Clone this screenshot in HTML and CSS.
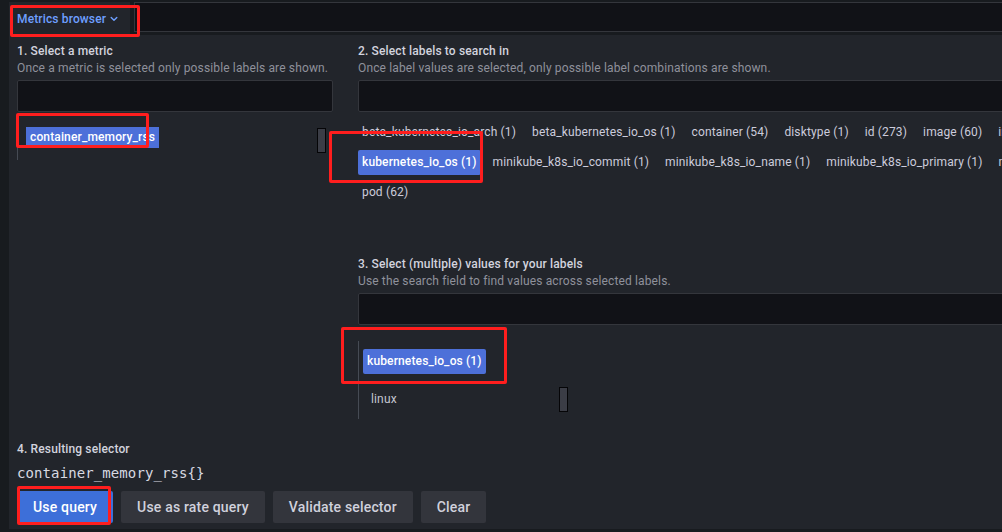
FILE: index.html
```html
<!DOCTYPE html>
<html lang="en">
<head>
<meta charset="utf-8">
<title>Metrics browser</title>
<link rel="stylesheet" href="styles.css">
</head>
<body>
<div class="app">
  <div class="toolbar">
    <button class="mb-btn">Metrics browser
      <svg class="chev" width="8" height="6" viewBox="0 0 8 6"><path d="M1.2 1.5 L4 4.3 L6.8 1.5" fill="none" stroke="#6e9fff" stroke-width="1.4" stroke-linecap="round" stroke-linejoin="round"/></svg>
    </button>
    <div class="query-input"></div>
  </div>

  <div class="browser">
    <div class="columns">
      <section class="col-metric">
        <div class="sec-title">1. Select a metric</div>
        <div class="sec-desc">Once a metric is selected only possible labels are shown.</div>
        <div class="input"></div>
        <div class="metric-list">
          <span class="chip chip-metric">container_memory_rss</span>
          <span class="thumb thumb-metric"></span>
        </div>
      </section>

      <section class="col-labels">
        <div class="sec-title">2. Select labels to search in</div>
        <div class="sec-desc">Once label values are selected, only possible label combinations are shown.</div>
        <div class="input"></div>
        <div class="label-list">
          <span class="label">beta_kubernetes_io_arch (1)</span>
          <span class="label">beta_kubernetes_io_os (1)</span>
          <span class="label">container (54)</span>
          <span class="label">disktype (1)</span>
          <span class="label">id (273)</span>
          <span class="label">image (60)</span>
          <span class="label">instance (1)</span>
          <span class="label">job (1)</span>
          <span class="label">kubernetes_io_arch (1)</span>
          <span class="label">kubernetes_io_hostname (1)</span>
          <span class="row-break"></span>
          <span class="label label-on">kubernetes_io_os (1)</span>
          <span class="label">minikube_k8s_io_commit (1)</span>
          <span class="label">minikube_k8s_io_name (1)</span>
          <span class="label">minikube_k8s_io_primary (1)</span>
          <span class="label">minikube_k8s_io_updated_at (1)</span>
          <span class="label">minikube_k8s_io_version (1)</span>
          <span class="label">name (64)</span>
          <span class="row-break"></span>
          <span class="label">pod (62)</span>
        </div>

        <div class="sec-values">
          <div class="sec-title">3. Select (multiple) values for your labels</div>
          <div class="sec-desc">Use the search field to find values across selected labels.</div>
          <div class="input"></div>
          <div class="values">
            <span class="chip chip-value">kubernetes_io_os (1)</span>
            <div class="value-list">
              <span class="value">linux</span>
              <span class="thumb"></span>
            </div>
          </div>
        </div>
      </section>
    </div>

    <section class="result">
      <div class="sec-title">4. Resulting selector</div>
      <div class="selector">container_memory_rss{}</div>
      <div class="actions">
        <button class="btn btn-primary">Use query</button>
        <button class="btn">Use as rate query</button>
        <button class="btn">Validate selector</button>
        <button class="btn">Clear</button>
      </div>
    </section>
  </div>

  <div class="annot annot-1"></div>
  <div class="annot annot-2"></div>
  <div class="annot annot-3"></div>
  <div class="annot annot-4"></div>
  <div class="annot annot-5"></div>
</div>
</body>
</html>
```

FILE: styles.css
```css
* { box-sizing: border-box; }

html, body {
  margin: 0;
  padding: 0;
}

body {
  width: 1002px;
  height: 532px;
  overflow: hidden;
  background: #181b1f;
  font-family: Roboto, "Liberation Sans", sans-serif;
  letter-spacing: 0.14px;
  color: #ccccdc;
  position: relative;
}

.app {
  padding-left: 9px;
  height: 529px;
  display: flex;
  flex-direction: column;
}

/* top toolbar */
.toolbar {
  display: flex;
  height: 35px;
  flex: none;
}

.mb-btn {
  width: 121px;
  margin-top: 2px;
  background: #22252b;
  border: 0;
  color: #6e9fff;
  font: 500 12px Roboto, "Liberation Sans", sans-serif;
  letter-spacing: 0.14px;
  padding: 0 0 0 8px;
  display: flex;
  align-items: center;
  gap: 4px;
}

.chev { margin-top: 1px; }

.query-input {
  flex: 1;
  margin: 2px 0 3px 4px;
  background: #111217;
  border: 1px solid #34363c;
  border-right: 0;
}

/* browser panel */
.browser {
  flex: 1;
  background: #22252b;
  padding: 8px 0 6px 8px;
  display: flex;
  flex-direction: column;
}

.columns {
  display: flex;
  gap: 25px;
}

.col-metric {
  flex: 0 0 316px;
}

.col-labels {
  flex: 0 0 900px;
}

.sec-title {
  font-size: 12px;
  font-weight: 500;
  line-height: 16px;
  color: #d2d3de;
}

.sec-desc {
  margin-top: 1px;
  font-size: 12px;
  line-height: 16px;
  color: #8f919b;
}

.input {
  margin-top: 4px;
  height: 32px;
  background: #111217;
  border: 1px solid #34363c;
  border-radius: 2px;
}

/* metric list */
.metric-list {
  margin-top: 3px;
  height: 45px;
  border-left: 1px solid #464b54;
  padding: 12px 7px 0 8px;
  display: flex;
  justify-content: space-between;
  align-items: flex-start;
}

.chip {
  background: #4d70d9;
  color: #ffffff;
  font-size: 12px;
  font-weight: 500;
  padding: 0 4px;
  border-radius: 2px;
}

.chip-metric {
  height: 21px;
  line-height: 21px;
  border-radius: 0;
}

.thumb {
  width: 9px;
  height: 25px;
  background: #3b3d46;
  border: 1px solid #050507;
}

.thumb-metric { margin-top: 1px; }

/* labels */
.label-list {
  margin-top: 8px;
  width: 1500px;
  display: flex;
  flex-wrap: wrap;
}

.label {
  height: 25px;
  line-height: 25px;
  padding: 0 4px;
  margin: 0 8px 5px 0;
  font-size: 12px;
  color: #ccccdc;
  border-radius: 2px;
}

.label-on {
  background: #4d70d9;
  color: #ffffff;
  font-weight: 500;
}

.row-break {
  flex-basis: 100%;
  height: 0;
}

/* values */
.sec-values {
  margin-top: 46px;
}

.values {
  margin-top: 16px;
  height: 78px;
  border-left: 1px solid #464b54;
  padding: 8px 0 0 4px;
  display: flex;
  flex-direction: column;
  align-items: flex-start;
}

.chip-value {
  height: 25px;
  line-height: 25px;
}

.value-list {
  margin-top: 13px;
  width: 205px;
  display: flex;
  justify-content: space-between;
  align-items: flex-start;
}

.value {
  padding-left: 8px;
  line-height: 24px;
  font-size: 12px;
  color: #c4c5d0;
}

/* result */
.result {
  margin-top: 22px;
}

.selector {
  margin-top: 6px;
  font-family: "DejaVu Sans Mono", "Liberation Mono", monospace;
  font-size: 14px;
  letter-spacing: 0.1px;
  line-height: 20px;
  color: #d8d9e2;
}

.actions {
  margin-top: 8px;
  display: flex;
  gap: 8px;
}

.btn {
  height: 32px;
  padding: 0 16px;
  border: 0;
  border-radius: 2px;
  background: #33353c;
  color: #d0d1dc;
  font: 500 14px Roboto, "Liberation Sans", sans-serif;
  letter-spacing: 0.18px;
}

.btn-primary {
  background: #3d6fd9;
  color: #ffffff;
}

/* red annotation boxes drawn over the screenshot */
.annot {
  position: absolute;
  border: 3px solid #ff1e1e;
  border-radius: 2px;
  pointer-events: none;
}

.annot-1 { left: 10px; top: 5px; width: 130px; height: 32px; }
.annot-2 { left: 16px; top: 113px; width: 133px; height: 35px; }
.annot-3 { left: 329px; top: 131px; width: 154px; height: 52px; }
.annot-4 { left: 341px; top: 327px; width: 166px; height: 57px; }
.annot-5 { left: 17px; top: 486px; width: 94px; height: 39px; }
```
